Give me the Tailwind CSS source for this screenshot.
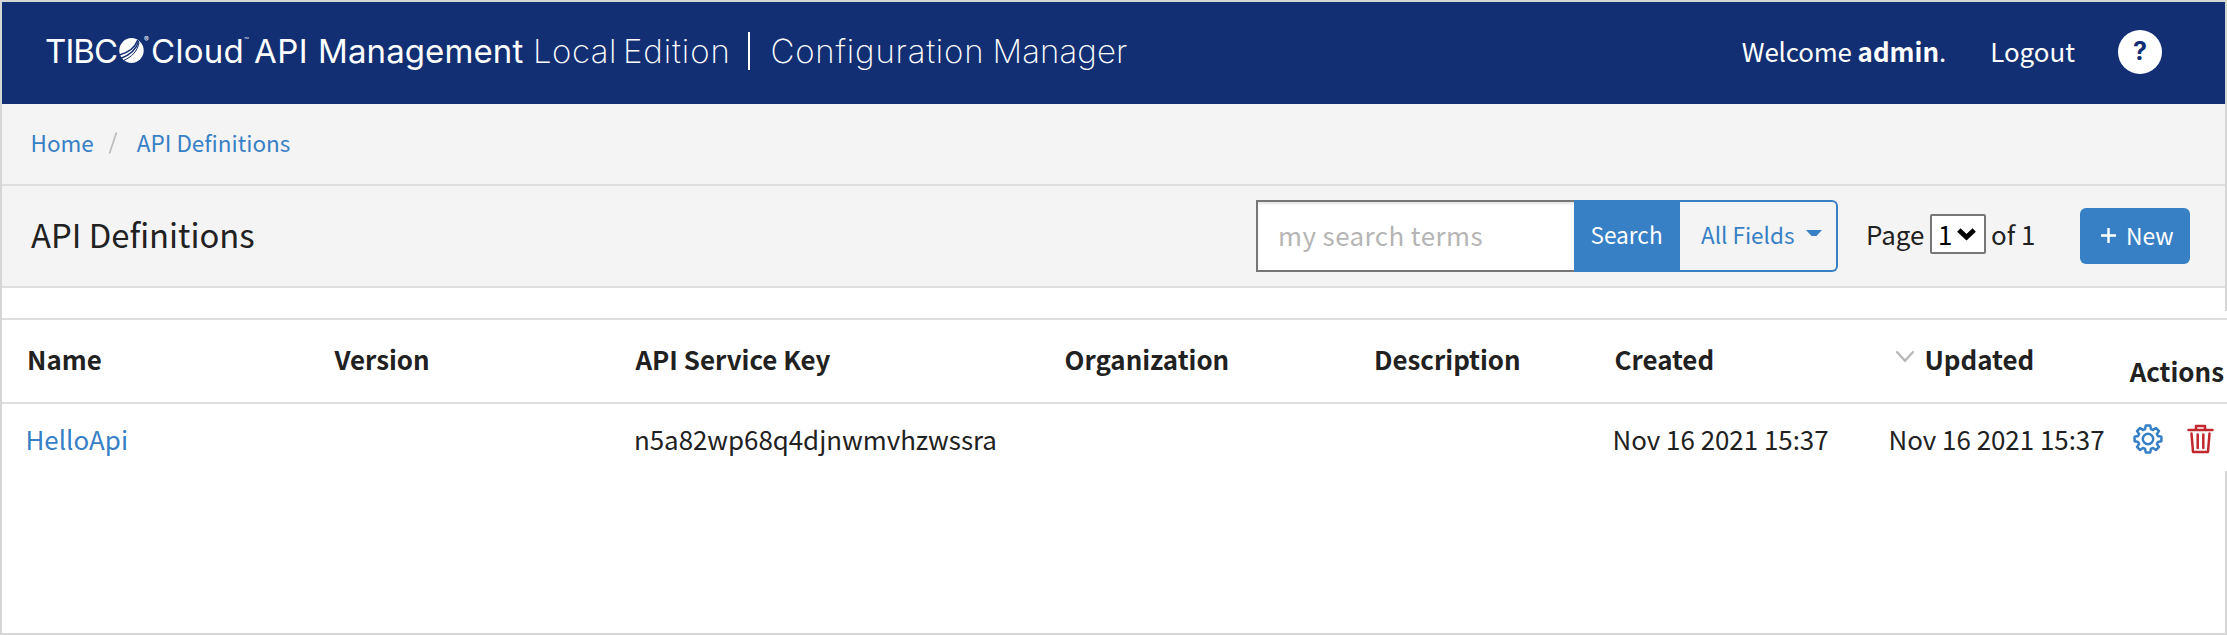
<!DOCTYPE html>
<html lang="en">
<head>
<meta charset="utf-8">
<title>API Definitions</title>
<script src="https://cdn.jsdelivr.net/npm/@tailwindcss/browser@4"></script>
</head>
<body class="h-[635px] w-[2227px] overflow-hidden bg-white font-['Noto_Sans_CJK_SC','Noto_Sans',sans-serif] text-[25.9px] text-[#212121]">
<div class="flex h-[635px] w-[2227px] flex-col border-2 border-[#d6d6d6]">
  <header class="flex h-[102px] shrink-0 items-center justify-between bg-[#122f73] pl-[43px] pr-[63px] text-white">
    <div class="mb-1 flex h-[38px] items-center whitespace-nowrap pb-px font-['Inter',sans-serif] text-[33px] leading-[38px]">
      <span class="w-[74px] tracking-[-0.9px]">TIBC</span>
      <svg class="h-[25px] w-[25px]" viewBox="0 0 25 25"><ellipse cx="12.5" cy="12.5" rx="12.2" ry="12.4" fill="#fff"/><g fill="none" stroke="#122f73" stroke-linecap="round"><path d="M18.5 2.5C16 9.5 9 14.5 0.5 17" stroke-width="1.5"/><path d="M19.5 3.5C17.5 11 11 17 1.500 20.5" stroke-width="1.4"/><path d="M20 5C18.5 13 13 19 4 22.8" stroke-width="1"/></g></svg>
      <span class="mt-[4px] w-[7px] self-start text-[7px] leading-[7px]">®</span>
      <span class="w-[93px] tracking-[0.3px]">Cloud</span>
      <span class="mt-[4px] w-[10px] self-start text-[8px] font-light leading-[9px]">™</span>
      <span class="w-[64px] tracking-[0.5px]">API</span>
      <span class="w-[215px] tracking-[0.1px]">Management</span>
      <span class="w-[90px] font-[150] tracking-[0.5px]">Local</span>
      <span class="w-[124.5px] font-[150] tracking-[0.9px]">Edition</span>
      <span class="h-[38px] w-[2px] bg-white"></span>
      <span class="ml-[21px] w-[222px] font-[150] tracking-[0.8px]">Configuration</span>
      <span class="font-[150] tracking-[0.1px]">Manager</span>
    </div>
    <div class="flex items-center pb-[2px]">
      <span class="mr-[44px] pb-[3px] leading-9"><span class="tracking-[-0.15px]">Welcome</span> <b>admin</b>.</span>
      <span class="mr-[43px] pb-[3px] leading-9">Logout</span>
      <span class="flex size-[44px] items-center justify-center rounded-full bg-white font-['Inter',sans-serif] text-[25px] font-bold text-[#122f73]">?</span>
    </div>
  </header>

  <nav class="flex h-[82px] shrink-0 items-center border-b-2 border-[#dedede] bg-[#f4f4f4] pb-[3px] pl-[28.5px] text-[22.5px] text-[#3880c5]">
    <a>Home</a>
    <svg class="ml-[14.5px] mr-[18.5px] h-[22px] w-[10px]" viewBox="0 0 10 22"><path d="M8.5 0.5L1.5 21.5" stroke="#b9b9b9" stroke-width="1.6"/></svg>
    <a>API Definitions</a>
  </nav>

  <section class="flex h-[102px] shrink-0 items-center border-b-2 border-[#dedede] bg-[#f4f4f4] pl-[29px] pr-[35px]">
    <h1 class="flex-1 pb-[5px] text-[32.8px]">API Definitions</h1>
    <div class="flex h-[72px]">
      <div class="flex w-[318px] items-center border-2 border-r-0 border-[#767676] bg-white pb-[2px] pl-[20px] tracking-[0.45px] text-[#b5b5b5] shadow-[inset_0_2px_2px_rgba(0,0,0,0.1)]">my search terms</div>
      <div class="flex w-[106px] items-center bg-[#3880c5] pb-[3px] pl-[16.5px] text-[22.6px] text-white">Search</div>
      <div class="flex w-[158px] items-center rounded-r-[6px] border-2 border-l-0 border-[#3880c5] pb-[3px] pl-[21px] text-[22.5px] text-[#3880c5]">All Fields
        <svg class="-mt-[2px] ml-[12px] h-[7px] w-[16px]" viewBox="0 0 16 7"><path d="M0 0H16L10.5 6H5.5Z" fill="#3880c5"/></svg>
      </div>
    </div>
    <div class="ml-[28px] flex w-[214px] items-center pb-[4px]">
      <span class="w-[64px]">Page</span>
      <span class="flex h-[40px] w-[56px] items-center rounded-[2px] border-2 border-[#767676] bg-white pl-[6px] text-black">1
        <svg class="ml-[5px] h-[13px] w-[19px]" viewBox="0 0 19 13"><path d="M1.8 2L9.5 9.3L17.2 2" fill="none" stroke="#000" stroke-width="4.8"/></svg>
      </span>
      <span class="ml-[5px]">of 1</span>
    </div>
    <button class="flex h-[56px] w-[110px] items-center rounded-[6px] bg-[#3880c5] pb-[2px] pl-[21px] text-[22.9px] text-white">
      <svg class="mr-[10px] h-[15px] w-[15px]" viewBox="0 0 15 15"><path d="M7.5 0V15M0 7.5H15" stroke="#fff" stroke-width="2.4"/></svg>New
    </button>
  </section>

  <main class="-mr-[2px] mt-[23px] h-[160px] shrink-0 bg-white pt-[7px]">
    <div class="grid h-[86px] grid-cols-[307.5px_301px_428.5px_310px_240px_276px_1fr] items-center border-y-2 border-[#dedede] pb-[4px] pl-[23px] font-bold">
      <span class="pl-[2px]">Name</span>
      <span class="pl-[2px]">Version</span>
      <span class="pl-[2px]">API Service Key</span>
      <span class="pl-[2.5px]">Organization</span>
      <span class="pl-[2px]">Description</span>
      <span class="pl-[2.5px]">Created</span>
      <span class="flex items-center pl-[8px]">
        <svg class="-mt-[4px] mr-[10.5px] h-[12px] w-[18px]" viewBox="0 0 18 12"><path d="M1.2 1.2L9 9.8L16.8 1.2" fill="none" stroke="#b9b9b9" stroke-width="2.4" stroke-linecap="round"/></svg>Updated
        <span class="ml-auto mt-[24px] pr-[3px]">Actions</span>
      </span>
    </div>
    <div class="grid h-[67px] grid-cols-[307.5px_301px_428.5px_310px_240px_276px_243px_1fr] items-center pl-[23.5px] pt-[3px]">
      <a class="text-[#3880c5]">HelloApi</a>
      <span></span>
      <span class="tracking-[-0.03px]">n5a82wp68q4djnwmvhzwssra</span>
      <span></span>
      <span></span>
      <span>Nov 16 2021 15:37</span>
      <span>Nov 16 2021 15:37</span>
      <span class="flex items-center pl-[1px]">
        <svg class="h-[30px] w-[30px]" viewBox="-15 -15 30 30" fill="none" stroke="#3880c5" stroke-width="2.5" stroke-linejoin="round"><path d="M-2.200 -13.400H2.200L3 -9.800Q4.400 -9.400 5 -8.900L7.900 -11L11 -7.900L8.900 -5Q9.500 -4 9.800 -3L13.400 -2.200V2.200L9.800 3Q9.500 4 8.900 5L11 7.900L7.900 11L5 8.900Q4 9.500 3 9.800L2.200 13.400H-2.200L-3 9.800Q-4 9.500 -5 8.900L-7.900 11L-11 7.900L-8.900 5Q-9.500 4 -9.800 3L-13.400 2.200V-2.200L-9.800 -3Q-9.500 -4 -8.900 -5L-11 -7.900L-7.900 -11L-5 -8.900Q-4 -9.500 -3 -9.800Z"/><circle r="5.200"/></svg>
        <svg class="ml-[24px] h-[30px] w-[27px]" viewBox="0 0 27 30" fill="none" stroke="#c1272d" stroke-width="2.5" stroke-linejoin="round" stroke-linecap="round"><path d="M1.500 6H25.500M9 5.500V2H18V5.500M4.500 9.500L6 28H21L22.500 9.500M10.700 10.500V24M16.300 10.500V24"/></svg>
      </span>
    </div>
  </main>
</div>
</body>
</html>
